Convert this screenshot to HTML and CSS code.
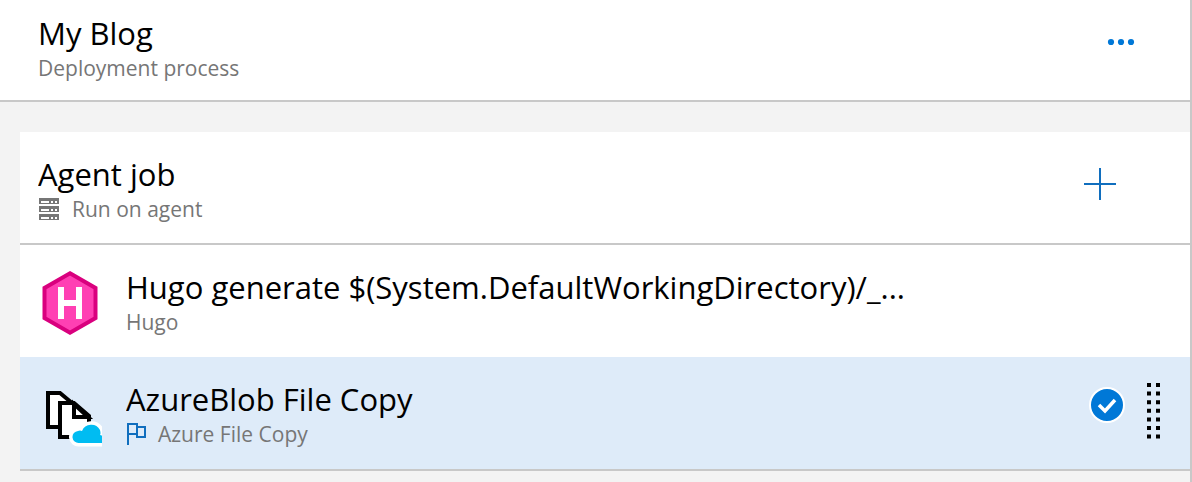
FILE: index.html
```html
<!DOCTYPE html>
<html lang="en">
<head>
<meta charset="utf-8">
<title>My Blog - Deployment process</title>
<link rel="stylesheet" href="styles.css">
</head>
<body>
<main class="panel">
  <header class="process">
    <div class="text">
      <h1 class="title">My Blog</h1>
      <p class="subtitle">Deployment process</p>
    </div>
    <button class="icon-button more" type="button" aria-label="More actions">
      <svg width="28" height="8" viewBox="0 0 28 8" fill="#0078d7"><circle cx="4" cy="4" r="3.1"/><circle cx="14" cy="4" r="3.1"/><circle cx="24" cy="4" r="3.1"/></svg>
    </button>
  </header>
  <section class="job">
    <div class="row job-header">
      <div class="text">
        <h2 class="title">Agent job</h2>
        <p class="subtitle">
          <svg class="server" width="22" height="22" viewBox="0 0 22 22"><path fill="#767676" d="M1 0h20v6H1zM1 8h20v6H1zM1 16h20v6H1z"/><path fill="#fff" d="M3 3h8v2H3zM13 3h2v2h-2zM17 3h2v2h-2zM3 11h8v2H3zM13 11h2v2h-2zM17 11h2v2h-2zM3 19h8v2H3zM13 19h2v2h-2zM17 19h2v2h-2z"/></svg>
          <span>Run on agent</span>
        </p>
      </div>
      <button class="icon-button add" type="button" aria-label="Add a task">
        <svg width="32" height="32" viewBox="0 0 32 32"><path fill="#106ebe" d="M15 0h2v15h15v2H17v15h-2V17H0v-2h15z"/></svg>
      </button>
    </div>
    <ul class="tasks">
      <li class="row task">
        <svg class="logo" width="64" height="64" viewBox="0 0 64 64"><path fill="#ff40b3" stroke="#d9007e" stroke-width="4" d="M32 2.3 57.500 17v30L32 61.700 6.500 47V17z"/><path fill="#fff" d="M20 16h6v13h12V16h6v32h-6V35H26v13h-6z"/></svg>
        <div class="text">
          <h3 class="title">Hugo generate $(System.DefaultWorkingDirectory)/_...</h3>
          <p class="subtitle">Hugo</p>
        </div>
      </li>
      <li class="row task selected">
        <svg class="logo" width="64" height="64" viewBox="0 0 64 64">
          <path fill="#fff" stroke="#000" stroke-width="4" d="M21 44H10V10h12l12 10"/>
          <path fill="#fff" d="M22 20h14l15 14v20H22z"/>
          <path fill="none" stroke="#000" stroke-width="4" d="M32 54H22V20h14l15 13v7"/>
          <path fill="#fff" stroke="#000" stroke-width="4" d="M36 21v13h14z"/>
          <path fill="#00bcf2" stroke="#fff" stroke-width="7" paint-order="stroke" d="M41 60a6 6 0 0 1-1-12q2-1 4 0a10 10 0 0 1 18-1q1 4 0 5 4 0 4 8z"/>
        </svg>
        <div class="text">
          <h3 class="title">AzureBlob File Copy</h3>
          <p class="subtitle">
            <svg class="flag" width="20" height="22" viewBox="0 0 20 22" fill="none" stroke="#106ebe" stroke-width="2"><path d="M2 22V1h9v10H2M11 4h8v10h-8v-3"/></svg>
            <span>Azure File Copy</span>
          </p>
        </div>
        <input class="check" type="checkbox" checked aria-label="Select AzureBlob File Copy">
        <svg class="grip" width="14" height="58" viewBox="0 0 14 58" aria-hidden="true"><path stroke="#000" stroke-width="4" stroke-dasharray="4 4.600" d="M2 1v57M11 1v57"/></svg>
      </li>
    </ul>
  </section>
</main>
</body>
</html>
```
FILE: styles.css
```css
* { box-sizing: border-box; }

body {
  margin: 0;
  background: #f3f3f3;
  color: #000;
  font-family: "Segoe UI", "Open Sans", "Noto Sans", sans-serif;
}

.panel {
  min-height: 100vh;
  border-right: 2px solid #c8c8c8;
}

.process,
.row {
  display: flex;
  align-items: flex-start;
}

.process {
  padding: 12px 55px 18px 38px;
  background: #fff;
  border-bottom: 2px solid #c8c8c8;
}

.text {
  flex: 1;
  min-width: 0;
}

.title {
  margin: 0;
  overflow: hidden;
  font-size: 31px;
  font-weight: 400;
  line-height: 42px;
  white-space: nowrap;
  text-overflow: ellipsis;
}

.subtitle {
  display: flex;
  align-items: center;
  gap: 12px;
  margin: 0;
  color: #767676;
  font-size: 21px;
  line-height: 28px;
}

.icon-button {
  display: flex;
  padding: 0;
  border: 0;
  background: none;
  cursor: pointer;
}

.more { margin-top: 26px; }

.add { margin-top: 15px; }

.job {
  margin: 30px 0 0 20px;
  background: #fff;
}

.job-header {
  padding: 21px 74px 20px 18px;
  border-bottom: 2px solid #c8c8c8;
}

.tasks {
  margin: 0;
  padding: 0;
  list-style: none;
}

.task {
  gap: 24px;
  padding: 21px 29px 21px 18px;
}

.logo {
  flex: none;
  margin: 5px 0 0;
  overflow: hidden;
}

.selected {
  background: #deebf9;
  border-bottom: 2px solid #c8c8c8;
}

.check {
  flex: none;
  width: 36px;
  height: 36px;
  margin: 9px -2px 0 0;
  appearance: none;
  border: 2px solid #fff;
  border-radius: 50%;
  background: #0078d7 url("data:image/svg+xml,%3Csvg xmlns='http://www.w3.org/2000/svg' viewBox='0 0 32 32'%3E%3Cpath fill='none' stroke='white' stroke-width='3.500' d='M8 16l6 6L24 11'/%3E%3C/svg%3E") center / 32px 32px no-repeat;
}

.grip {
  flex: none;
  margin-top: 4px;
}
```
